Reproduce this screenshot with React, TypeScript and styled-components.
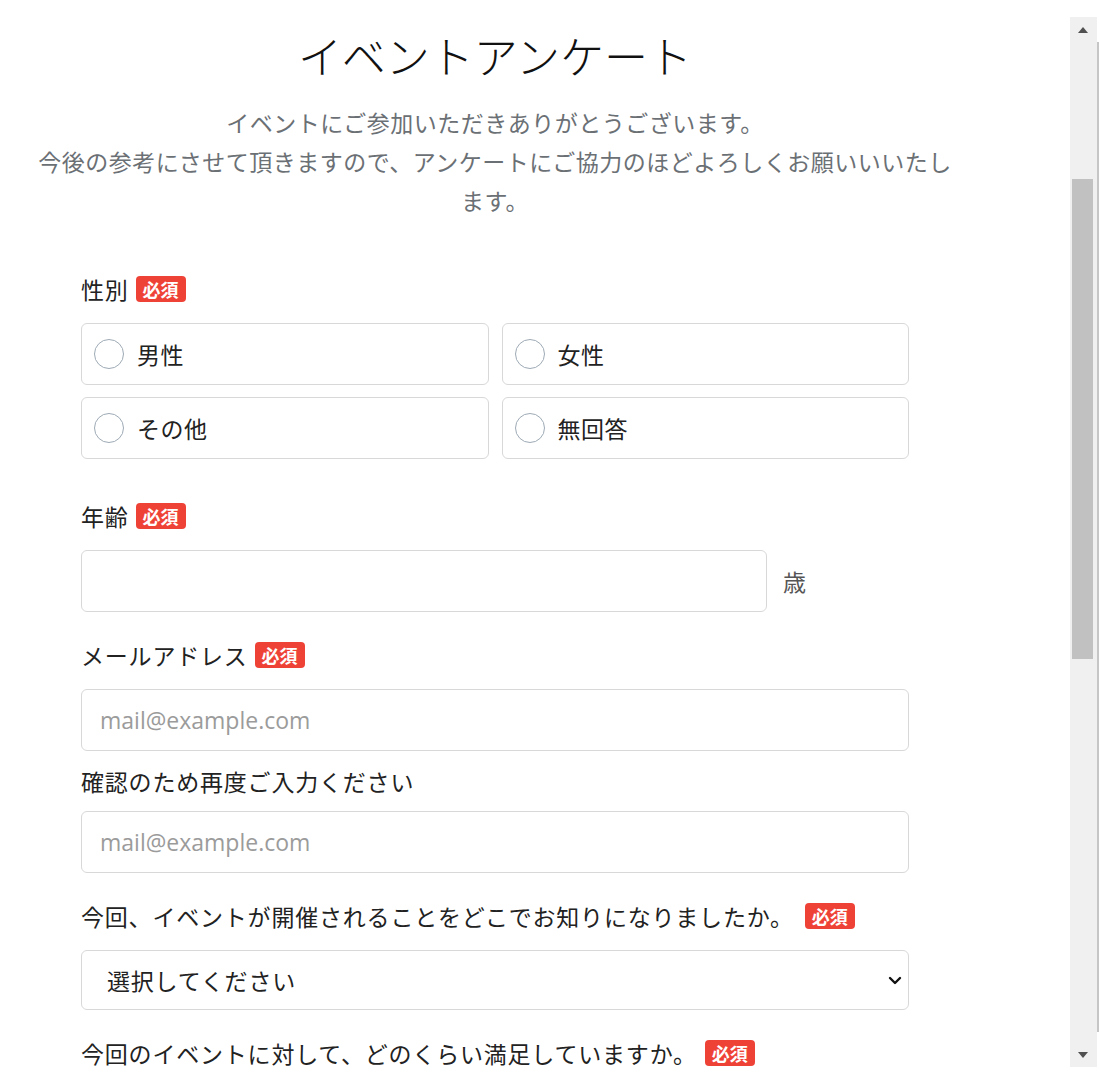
import React, { useLayoutEffect, useRef } from 'react';
import styled, { createGlobalStyle } from 'styled-components';

const GENDERS = ['男性', '女性', 'その他', '無回答'];
const SATISFACTION = ['とても満足', '満足', '普通', 'やや不満', '不満'];

const SCROLL_TOP = 302;
const THUMB_OFFSET = 137;
const THUMB_HEIGHT = 480;

const GlobalStyle = createGlobalStyle`
    html, body {
        margin: 0;
        padding: 0;
        background: #fff;
    }
    body {
        overflow: hidden;
        font-family: 'Noto Sans CJK JP', 'Noto Sans', sans-serif;
        color: #222;
    }
    * {
        box-sizing: border-box;
    }
`;

const App = () => {
    const viewRef = useRef<HTMLDivElement>(null);

    useLayoutEffect(() => {
        if (viewRef.current) {
            viewRef.current.scrollTop = SCROLL_TOP;
        }
    }, []);

    return (
        <>
            <GlobalStyle />
            <Screen>
                <Frame>
                    <Viewport ref={viewRef}>
                        <Page>
                            <Container>
                                <Title>イベントアンケート</Title>
                                <Lead>
                                    イベントにご参加いただきありがとうございます。
                                    <br />
                                    今後の参考にさせて頂きますので、アンケートにご協力のほどよろしくお願いいいたします。
                                </Lead>
                                <Form>
                                    <Field $gap={40}>
                                        <Label>
                                            性別<Badge>必須</Badge>
                                        </Label>
                                        <RadioGrid>
                                            {GENDERS.map((g) => (
                                                <RadioOption key={g}>
                                                    <RadioInput type="radio" name="gender" />
                                                    {g}
                                                </RadioOption>
                                            ))}
                                        </RadioGrid>
                                    </Field>
                                    <Field>
                                        <Label>
                                            年齢<Badge>必須</Badge>
                                        </Label>
                                        <AgeRow>
                                            <AgeInput type="text" />
                                            <Unit>歳</Unit>
                                        </AgeRow>
                                    </Field>
                                    <Field>
                                        <Label>
                                            メールアドレス<Badge>必須</Badge>
                                        </Label>
                                        <TextInput type="email" placeholder="mail@example.com" />
                                        <SubLabel>確認のため再度ご入力ください</SubLabel>
                                        <TextInput type="email" placeholder="mail@example.com" />
                                    </Field>
                                    <Field>
                                        <Label>
                                            今回、イベントが開催されることをどこでお知りになりましたか。
                                            <Badge $gap={11}>必須</Badge>
                                        </Label>
                                        <SelectWrap>
                                            <Select defaultValue="">
                                                <option value="">選択してください</option>
                                                <option value="web">Webサイト</option>
                                                <option value="sns">SNS</option>
                                                <option value="friend">知人の紹介</option>
                                                <option value="other">その他</option>
                                            </Select>
                                            <Chevron width="14" height="9" viewBox="0 0 14 9">
                                                <polyline
                                                    points="2,2 7,7 12,2"
                                                    fill="none"
                                                    stroke="#111"
                                                    strokeWidth="2.4"
                                                    strokeLinecap="round"
                                                    strokeLinejoin="round"
                                                />
                                            </Chevron>
                                        </SelectWrap>
                                    </Field>
                                    <Field $gap={40}>
                                        <Label>
                                            今回のイベントに対して、どのくらい満足していますか。
                                            <Badge $gap={8}>必須</Badge>
                                        </Label>
                                        <RadioGrid>
                                            {SATISFACTION.map((s) => (
                                                <RadioOption key={s}>
                                                    <RadioInput type="radio" name="satisfaction" />
                                                    {s}
                                                </RadioOption>
                                            ))}
                                        </RadioGrid>
                                    </Field>
                                    <Field>
                                        <Label>ご意見・ご感想をお聞かせください</Label>
                                        <TextArea />
                                    </Field>
                                    <SubmitRow>
                                        <SubmitButton type="button">送信する</SubmitButton>
                                    </SubmitRow>
                                </Form>
                            </Container>
                        </Page>
                    </Viewport>
                    <ScrollBar>
                        <ArrowButton>
                            <Arrow $dir="up" />
                        </ArrowButton>
                        <Track>
                            <Thumb style={{ marginTop: THUMB_OFFSET, height: THUMB_HEIGHT }} />
                        </Track>
                        <ArrowButton>
                            <Arrow $dir="down" />
                        </ArrowButton>
                    </ScrollBar>
                </Frame>
                <Edge>
                    <EdgeBar />
                </Edge>
            </Screen>
        </>
    );
};

export default App;

const Screen = styled.div`
    display: flex;
    width: 1099px;
    height: 1083px;
`;

const Frame = styled.div`
    display: flex;
    width: 1097px;
    height: 1050px;
    margin-top: 17px;
`;

const Viewport = styled.div`
    flex: 1;
    overflow: hidden;
    background: #fff;
`;

const ScrollBar = styled.div`
    display: flex;
    flex-direction: column;
    width: 27px;
    background: #f0f0f0;
`;

const ArrowButton = styled.div`
    display: flex;
    align-items: center;
    justify-content: center;
    height: 25px;
    flex-shrink: 0;
`;

const Arrow = styled.span<{ $dir: 'up' | 'down' }>`
    width: 0;
    height: 0;
    margin-left: -1px;
    border-left: 5.5px solid transparent;
    border-right: 5.5px solid transparent;
    ${(props) =>
        props.$dir === 'up' ? 'border-bottom: 6px solid #505050;' : 'border-top: 6px solid #505050;'}
`;

const Track = styled.div`
    flex: 1;
    padding: 0 4px 0 2px;
`;

const Thumb = styled.div`
    background: #c1c1c1;
`;

const Edge = styled.div`
    width: 2px;
    padding-top: 42px;
`;

const EdgeBar = styled.div`
    height: 990px;
    background: #c6c6c6;
`;

const Page = styled.div`
    min-height: 2188px;
    padding-top: 314px;
    padding-bottom: 60px;
`;

const Container = styled.div`
    width: 922px;
    margin-left: 34px;
`;

const Title = styled.h1`
    margin: 0;
    font-size: 44px;
    line-height: 53px;
    font-weight: 300;
    color: #111;
    text-align: center;
`;

const Lead = styled.p`
    margin: 21px 0 0;
    font-size: 23px;
    line-height: 39px;
    letter-spacing: 0.5px;
    color: #6b7075;
    text-align: center;
`;

const Form = styled.form`
    margin-top: 52px;
    padding: 0 47px;
`;

const Field = styled.div<{ $gap?: number }>`
    margin-bottom: ${(props) => props.$gap ?? 26}px;
`;

const Label = styled.div`
    display: flex;
    align-items: center;
    height: 34px;
    margin-bottom: 17px;
    font-size: 23px;
    letter-spacing: 0.8px;
    color: #222;
`;

const SubLabel = styled.div`
    height: 34px;
    margin: 13px 0;
    font-size: 23px;
    line-height: 34px;
    letter-spacing: 0.8px;
    color: #222;
`;

const Badge = styled.span<{ $gap?: number }>`
    display: inline-flex;
    align-items: center;
    justify-content: center;
    height: 26px;
    margin-left: ${(props) => props.$gap ?? 7}px;
    padding: 0 7px;
    border-radius: 4px;
    background: #ef4237;
    color: #fff;
    font-size: 18px;
    font-weight: 700;
    letter-spacing: 0;
`;

const RadioGrid = styled.div`
    display: grid;
    grid-template-columns: 1fr 1fr;
    gap: 12px 13px;
`;

const RadioOption = styled.label`
    display: flex;
    align-items: center;
    height: 62px;
    padding: 0 12px;
    border: 1px solid #d8d8d8;
    border-radius: 6px;
    font-size: 23px;
    letter-spacing: 0.5px;
    color: #222;
    cursor: pointer;
`;

const RadioInput = styled.input`
    appearance: none;
    width: 30px;
    height: 30px;
    margin: 0 13px 0 0;
    border: 1.5px solid #9eaab5;
    border-radius: 50%;
    background: #fff;
    flex-shrink: 0;

    &:checked {
        border: 9px solid #0d6efd;
    }
`;

const inputBase = `
    height: 62px;
    border: 1px solid #d8d8d8;
    border-radius: 6px;
    background: #fff;
    font-family: 'Open Sans', 'Noto Sans CJK JP', sans-serif;
    font-size: 23px;
    color: #222;
    outline: none;
`;

const AgeRow = styled.div`
    display: flex;
    align-items: center;
    gap: 16px;
`;

const AgeInput = styled.input`
    ${inputBase}
    flex: 0 0 686px;
    padding: 0 18px;
`;

const Unit = styled.span`
    font-size: 23px;
    color: #555;
`;

const TextInput = styled.input`
    ${inputBase}
    display: block;
    width: 100%;
    padding: 0 18px;

    &::placeholder {
        color: #9b9b9b;
    }
`;

const SelectWrap = styled.div`
    position: relative;
`;

const Select = styled.select`
    ${inputBase}
    appearance: none;
    display: block;
    width: 100%;
    height: 60px;
    padding: 0 40px 0 25px;
    font-family: 'Noto Sans CJK JP', sans-serif;
    font-size: 23px;
    letter-spacing: 0.8px;
`;

const Chevron = styled.svg`
    position: absolute;
    right: 7px;
    top: 26px;
`;

const TextArea = styled.textarea`
    ${inputBase}
    display: block;
    width: 100%;
    height: 180px;
    padding: 14px 18px;
    resize: none;
`;

const SubmitRow = styled.div`
    display: flex;
    justify-content: center;
    margin-top: 40px;
`;

const SubmitButton = styled.button`
    width: 320px;
    height: 62px;
    border: 0;
    border-radius: 6px;
    background: #0d6efd;
    color: #fff;
    font-family: 'Noto Sans CJK JP', sans-serif;
    font-size: 23px;
    cursor: pointer;
`;
